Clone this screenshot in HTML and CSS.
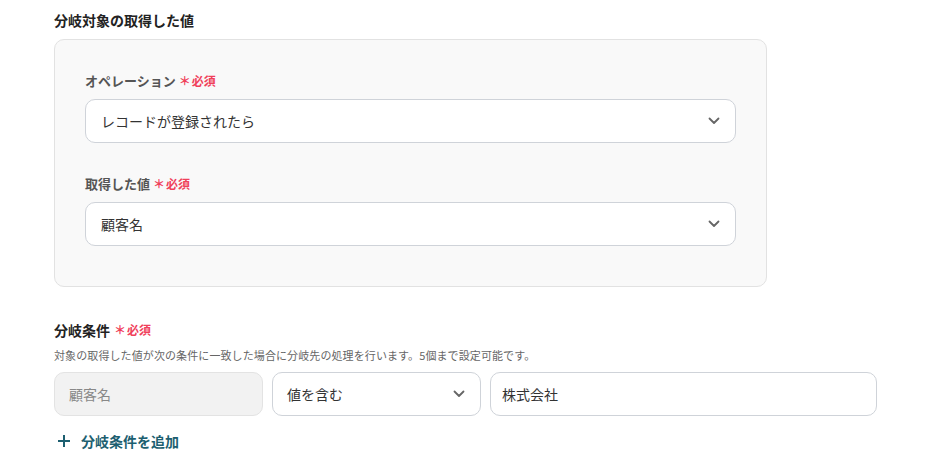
FILE: index.html
```html
<!DOCTYPE html>
<html lang="ja">
<head>
<meta charset="utf-8">
<link rel="stylesheet" href="styles.css">
</head>
<body>
<div class="page">
  <h2 class="section-title">分岐対象の取得した値</h2>
  <div class="panel">
    <div class="field">
      <div class="label">オペレーション<span class="req"><span class="ast">＊</span>必須</span></div>
      <div class="select">
        <span>レコードが登録されたら</span>
        <svg class="chev" width="12" height="8" viewBox="0 0 12 8"><path d="M1.5 1.5 L6 6 L10.5 1.5" fill="none" stroke="#666" stroke-width="1.8" stroke-linecap="round" stroke-linejoin="round"/></svg>
      </div>
    </div>
    <div class="field">
      <div class="label">取得した値<span class="req"><span class="ast">＊</span>必須</span></div>
      <div class="select">
        <span>顧客名</span>
        <svg class="chev" width="12" height="8" viewBox="0 0 12 8"><path d="M1.5 1.5 L6 6 L10.5 1.5" fill="none" stroke="#666" stroke-width="1.8" stroke-linecap="round" stroke-linejoin="round"/></svg>
      </div>
    </div>
  </div>

  <div class="cond">
    <h2 class="section-title">分岐条件<span class="req"><span class="ast">＊</span>必須</span></h2>
    <p class="desc">対象の取得した値が次の条件に一致した場合に分岐先の処理を行います。5個まで設定可能です。</p>
    <div class="row">
      <div class="box box-disabled">顧客名</div>
      <div class="box box-select">
        <span>値を含む</span>
        <svg class="chev" width="12" height="8" viewBox="0 0 12 8"><path d="M1.5 1.5 L6 6 L10.5 1.5" fill="none" stroke="#666" stroke-width="1.8" stroke-linecap="round" stroke-linejoin="round"/></svg>
      </div>
      <div class="box box-input">株式会社</div>
    </div>
    <div class="add">
      <svg width="14" height="14" viewBox="0 0 14 14"><path d="M7 1 V13 M1 7 H13" stroke="#1d5f70" stroke-width="2" fill="none"/></svg>
      <span>分岐条件を追加</span>
    </div>
  </div>
</div>
</body>
</html>
```

FILE: styles.css
```css
* { box-sizing: border-box; }
html, body { margin: 0; padding: 0; background: #fff; }
body {
  font-family: "Noto Sans CJK JP", "Noto Sans", sans-serif;
  color: #333;
}
.page {
  padding: 10px 0 0 54px;
  width: 931px;
}
.section-title {
  margin: 0;
  font-size: 14px;
  font-weight: 700;
  color: #222;
  line-height: 20px;
  display: flex;
  align-items: center;
}
.panel {
  margin-top: 9px;
  width: 713px;
  height: 248px;
  background: #f9f9f9;
  border: 1px solid #e2e2e2;
  border-radius: 10px;
  padding: 32px 30px 0 30px;
  display: flex;
  flex-direction: column;
  gap: 32px;
}
.label {
  font-size: 13px;
  font-weight: 700;
  color: #555;
  line-height: 18px;
  display: flex;
  align-items: center;
  margin-bottom: 9px;
}
.req {
  color: #f0405a;
  font-size: 12px;
  font-weight: 700;
  margin-left: 3px;
  display: inline-flex;
  align-items: center;
}
.ast { font-size: 12px; margin-right: 1px; }
.select {
  height: 44px;
  background: #fff;
  border: 1px solid #cfd3d9;
  border-radius: 10px;
  display: flex;
  align-items: center;
  justify-content: space-between;
  padding: 0 15px 0 15px;
  font-size: 14px;
  color: #333;
}
.chev { flex: none; }
.cond { margin-top: 33px; }
.cond .req { margin-left: 4px; }
.desc {
  margin: 7px 0 0 0;
  font-size: 11px;
  color: #666;
  line-height: 16px;
  letter-spacing: 0.1px;
}
.row {
  margin-top: 9px;
  display: flex;
  gap: 9px;
}
.box {
  height: 44px;
  border: 1px solid #cfd3d9;
  border-radius: 10px;
  display: flex;
  align-items: center;
  font-size: 14px;
  padding: 0 14px;
}
.box-disabled {
  width: 209px;
  background: #f2f2f2;
  border-color: #e3e3e3;
  color: #888;
}
.box-select {
  width: 209px;
  background: #fff;
  justify-content: space-between;
  padding-right: 15px;
  color: #333;
}
.box-input {
  width: 387px;
  background: #fff;
  padding-left: 11px;
  color: #333;
}
.add {
  margin-top: 15px;
  display: flex;
  align-items: center;
  gap: 10px;
  padding-left: 3px;
  color: #1d5f70;
  font-size: 14px;
  font-weight: 700;
}
```
